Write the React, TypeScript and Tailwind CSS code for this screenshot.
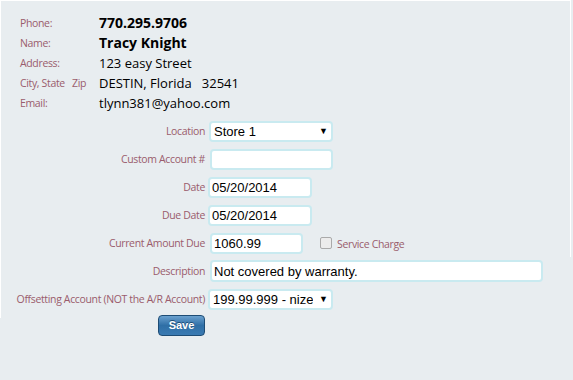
import React from "react";

const lbl = "text-[10.5px] tracking-[-0.35px] text-[#9a5c6c] leading-none whitespace-nowrap";
const val = "text-[13px] text-black leading-none";

function Info({ label, value, bold }: { label: React.ReactNode; value: React.ReactNode; bold?: boolean }) {
  return (
    <div className="flex items-center h-[20px]">
      <div className={`w-[79px] ${lbl}`}>{label}</div>
      <div className={`${val} ${bold ? "font-bold text-[14px]" : ""}`}>{value}</div>
    </div>
  );
}

const inputCls =
  "h-[21px] bg-white border-2 border-[#c9eaf0] rounded-[4px] px-[2px] flex items-center text-[13px] text-black leading-none";
const arial = { fontFamily: '"Liberation Sans", Arial, sans-serif' };

function Row({ label, children }: { label: string; children: React.ReactNode }) {
  return (
    <div className="flex items-center h-[28px]">
      <div className={`w-[208px] pr-[3px] text-right ${lbl}`}>{label}</div>
      {children}
    </div>
  );
}

function Select({ value, w }: { value: string; w: string }) {
  return (
    <div className={`${inputCls} ${w} justify-between`} style={arial}>
      <span className="pl-[1px] whitespace-nowrap overflow-hidden">{value}</span>
      <span className="text-[9px] pr-[1px]">▼</span>
    </div>
  );
}

export default function App() {
  return (
    <div
      className="w-[573px] h-[380px] bg-[#e8edf0] relative overflow-hidden"
      style={{ fontFamily: '"Open Sans", sans-serif' }}
    >
      <div className="absolute left-0 top-0 w-[571px] h-px bg-white" />
      <div className="absolute left-0 top-0 w-px h-[318px] bg-white" />
      <div className="absolute left-[570px] top-0 w-px h-[257px] bg-white" />
      <div className="pt-[13px] pl-[20px]">
        <Info label="Phone:" value="770.295.9706" bold />
        <Info label="Name:" value="Tracy Knight" bold />
        <Info label="Address:" value="123 easy Street" />
        <Info
          label={
            <span>
              City, State&nbsp;&nbsp;&nbsp;Zip
            </span>
          }
          value={<span>DESTIN, Florida&nbsp;&nbsp;&nbsp;32541</span>}
        />
        <Info label="Email:" value="tlynn381@yahoo.com" />
      </div>
      <div className="mt-[4px]">
        <Row label="Location">
          <Select value="Store 1" w="w-[124px] ml-[1px]" />
        </Row>
        <Row label="Custom Account #">
          <div className={`${inputCls} w-[123px] ml-[2px]`} style={arial} />
        </Row>
        <Row label="Date">
          <div className={`${inputCls} w-[104px]`} style={arial}>05/20/2014</div>
        </Row>
        <Row label="Due Date">
          <div className={`${inputCls} w-[104px]`} style={arial}>05/20/2014</div>
        </Row>
        <Row label="Current Amount Due">
          <div className={`${inputCls} w-[93px] ml-[2px]`} style={arial}>1060.99</div>
          <div className="ml-[17px] w-[12px] h-[12px] border border-[#aaa] rounded-[2px] bg-[#ececec]" />
          <span className={`ml-[5px] ${lbl} mt-[3px]`}>Service Charge</span>
        </Row>
        <Row label="Description">
          <div className={`${inputCls} w-[333px] ml-[2px] h-[22px]`} style={arial}>Not covered by warranty.</div>
        </Row>
        <Row label="Offsetting Account (NOT the A/R Account)">
          <Select value="199.99.999 - nize" w="w-[125px]" />
        </Row>
        <div className="flex">
          <div className="ml-[158px] mt-[2px] w-[47px] h-[21px] rounded-[4px] border border-[#1d4c75] bg-gradient-to-b from-[#6aa1cf] via-[#2f6fa6] to-[#3a7ab2] flex items-center justify-center text-white text-[11px] font-bold [text-shadow:0_-1px_0_#1d4c75]" style={arial}>
            Save
          </div>
        </div>
      </div>
    </div>
  );
}
